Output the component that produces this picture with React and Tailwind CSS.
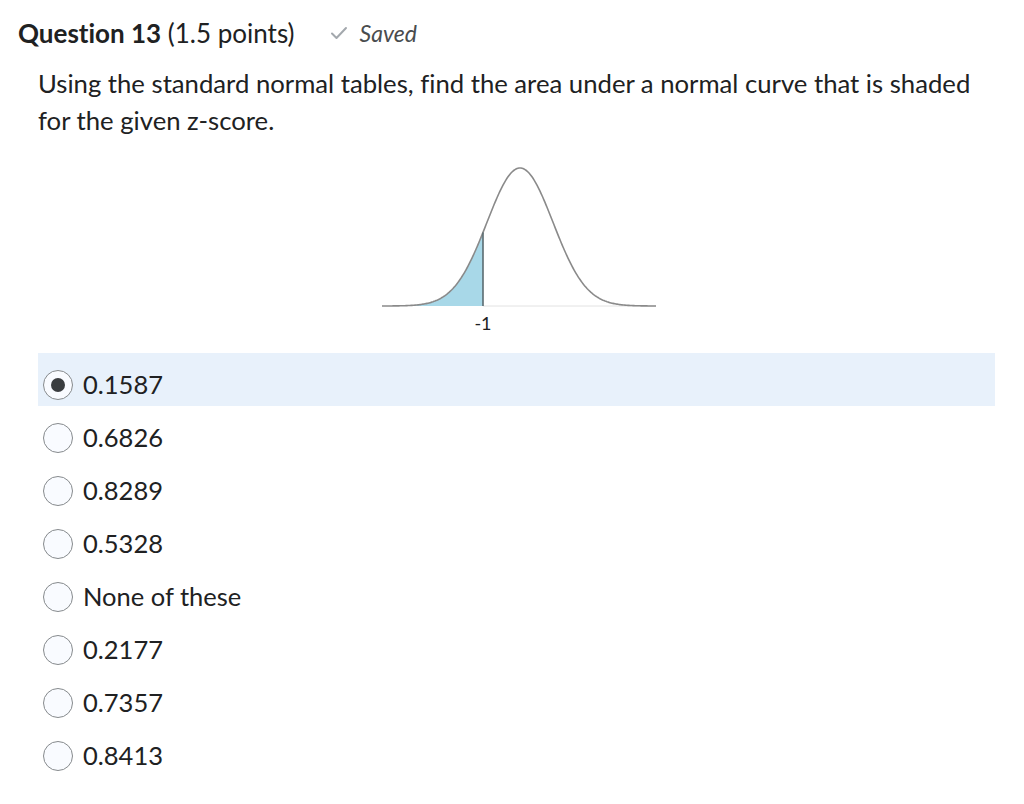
import React from 'react';

const options = ['0.1587', '0.6826', '0.8289', '0.5328', 'None of these', '0.2177', '0.7357', '0.8413'];

// normal curve drawn in page-ish coordinates (viewBox starts at 370,150)
const MEAN = 520;
const SIGMA = 33;
const BASE = 305;
const PEAK = 138;
const yAt = (x) => BASE - PEAK * Math.exp(-0.5 * ((x - MEAN) / SIGMA) ** 2);

const curvePath = () => {
    let d = '';
    for (let x = 382; x <= 656; x += 1) {
        d += (x === 382 ? 'M' : 'L') + x + ' ' + yAt(x).toFixed(2) + ' ';
    }
    return d;
};

const shadePath = () => {
    let d = 'M382 ' + BASE + ' ';
    for (let x = 382; x <= 483; x += 1) d += 'L' + x + ' ' + yAt(x).toFixed(2) + ' ';
    d += 'L483 ' + BASE + ' Z';
    return d;
};

const NormalCurve = () => (
    <svg width="300" height="190" viewBox="370 150 300 190" className="block">
        <line x1="483" y1="305" x2="656" y2="305" stroke="#e2e2e2" strokeWidth="1" />
        <path d={shadePath()} fill="#a8d8e8" />
        <path d={curvePath()} fill="none" stroke="#8a8a8a" strokeWidth="1.6" />
        <line x1="483" y1={yAt(483)} x2="483" y2="305" stroke="#5b6b70" strokeWidth="1.6" />
        <text x="483" y="329" textAnchor="middle" fontSize="18" fill="#202122" fontFamily="Lato, sans-serif">-1</text>
    </svg>
);

const Radio = ({ checked }) => (
    <span className="flex h-[30px] w-[30px] shrink-0 items-center justify-center rounded-full border border-[#868a8d] bg-[#f9fbff]">
        {checked && <span className="h-[14px] w-[14px] rounded-full bg-[#3a3d40]" />}
    </span>
);

export default function App() {
    return (
        <div className="min-h-screen bg-white text-[#202122] [font-variant-ligatures:none]" style={{ fontFamily: 'Lato, "Noto Sans", sans-serif' }}>
            <div className="pl-[18px] pr-[29px] pt-[17px]">
                {/* header */}
                <div className="flex items-center h-[32px]">
                    <h2 className="text-[26px] leading-[32px]">
                        <span className="font-bold">Question 13</span>
                        <span> (1.5 points)</span>
                    </h2>
                    <span className="ml-[35px] flex items-center gap-[12px] text-[#494c4e]">
                        <svg width="18" height="14" viewBox="0 0 18 14">
                            <path d="M2 7.5 L6.5 12 L16 2" fill="none" stroke="#a3a8ad" strokeWidth="2" strokeLinecap="round" strokeLinejoin="round" />
                        </svg>
                        <span className="italic text-[23px]">Saved</span>
                    </span>
                </div>

                {/* question body */}
                <div className="pl-[20px]">
                    <p className="mt-[16px] text-[25.7px] leading-[37px]">
                        Using the standard normal tables, find the area under a normal curve that is shaded for the given z-score.
                    </p>

                    <div className="mt-[12px] ml-[332px]">
                        <NormalCurve />
                    </div>

                    <div className="mt-[12px] flex flex-col">
                        {options.map((opt, i) => (
                            <label
                                key={opt}
                                className={`flex h-[53px] items-center gap-[10px] pl-[5px] pt-[10px] ${i === 0 ? 'bg-[#e8f1fb]' : ''}`}
                            >
                                <Radio checked={i === 0} />
                                <span className="text-[25.5px]">{opt}</span>
                            </label>
                        ))}
                    </div>
                </div>
            </div>
        </div>
    );
}
